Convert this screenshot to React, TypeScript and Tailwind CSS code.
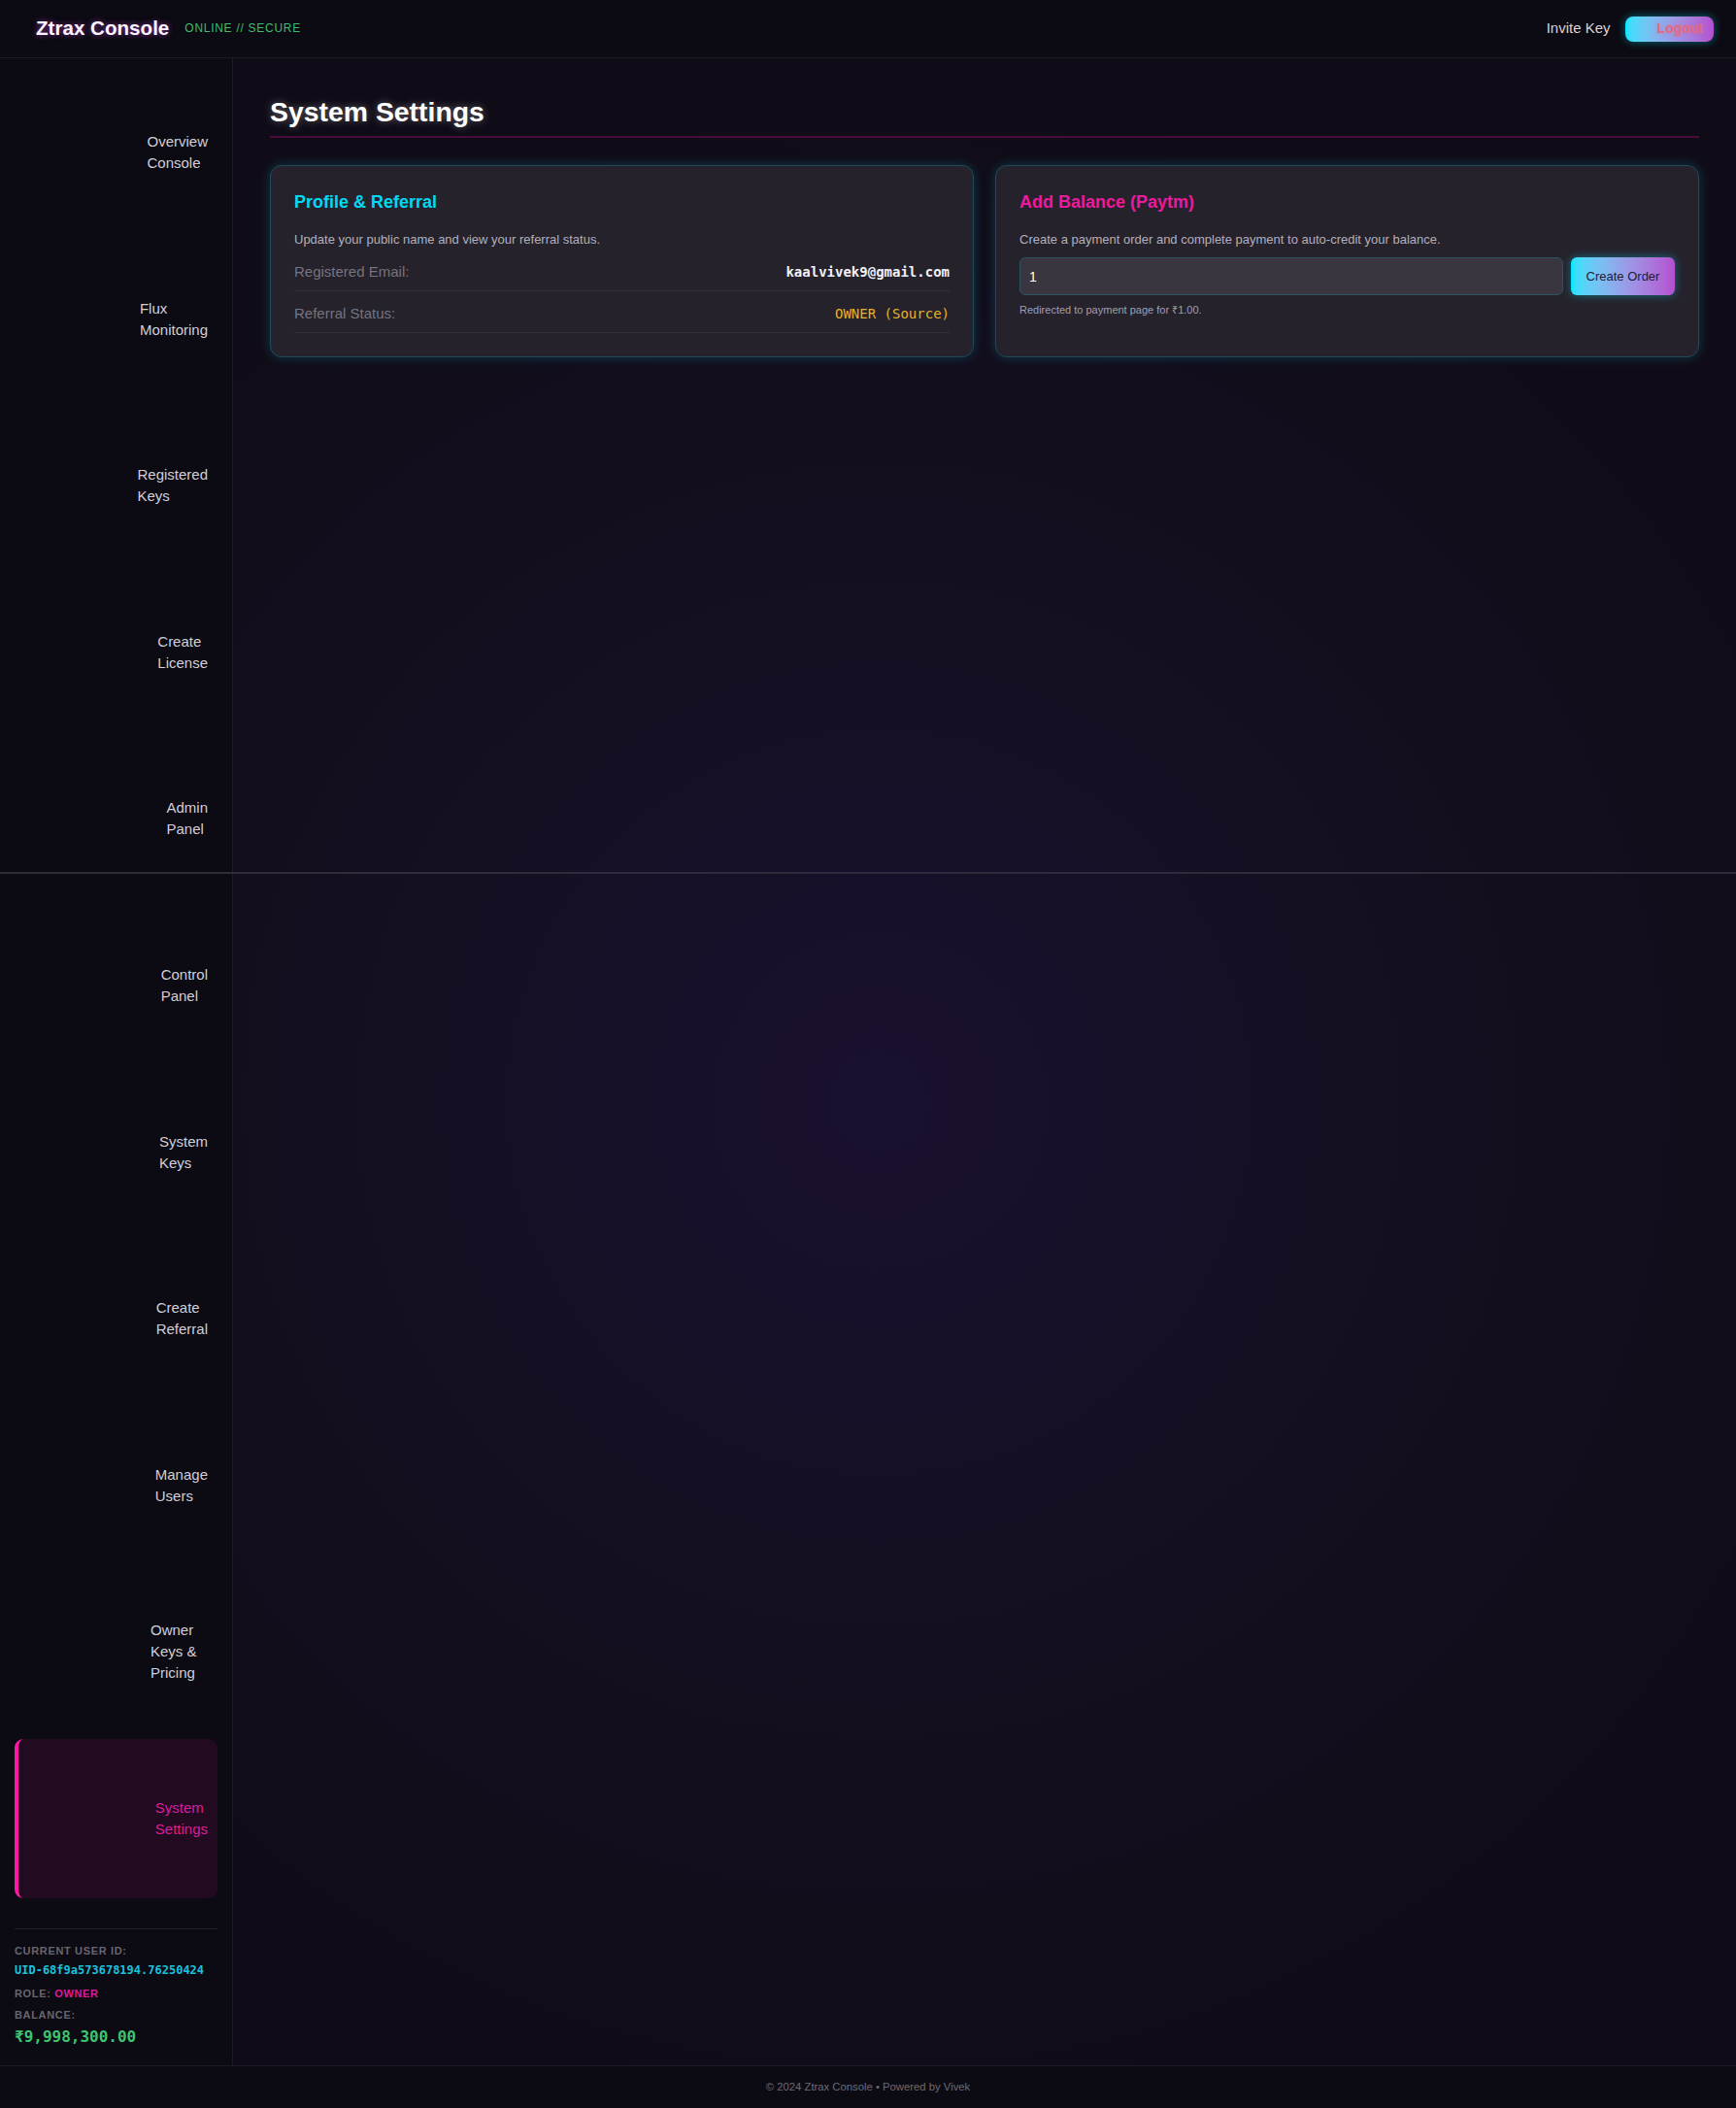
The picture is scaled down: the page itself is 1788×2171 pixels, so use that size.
import type { ReactNode } from 'react'

// ---------------------------------------------------------------------------
// Data
// ---------------------------------------------------------------------------

const navItems: { lines: string[]; active?: boolean; width?: string }[] = [
  { lines: ['Overview', 'Console'] },
  { lines: ['Flux', 'Monitoring'] },
  { lines: ['Registered', 'Keys'] },
  { lines: ['Create', 'License'] },
  { lines: ['Admin', 'Panel'] },
  { lines: ['Control', 'Panel'] },
  { lines: ['System', 'Keys'] },
  { lines: ['Create', 'Referral'] },
  { lines: ['Manage', 'Users'] },
  { lines: ['Owner', 'Keys &', 'Pricing'], width: 'w-[59px]' },
  { lines: ['System', 'Settings'], active: true },
]

const mono = "font-['DejaVu_Sans_Mono','Liberation_Mono',monospace]"

// ---------------------------------------------------------------------------
// Pieces
// ---------------------------------------------------------------------------

function Header() {
  return (
    <header className="flex h-[60px] items-center justify-between border-b border-[#1d1b26] bg-[#0c0a12] pl-[37px] pr-[23px]">
      <div className="flex items-center gap-[16px]">
        <span className="text-[20.6px] font-bold text-[#fbf4ff] [text-shadow:0_0_6px_rgba(230,80,255,0.55)]">
          Ztrax Console
        </span>
        <span className="text-[12px] font-medium tracking-[0.06em] text-[#3fbd6c]">ONLINE // SECURE</span>
      </div>
      <div className="flex items-center gap-[15px]">
        <span className="text-[15px] text-[#d7d4dd]">Invite Key</span>
        <button className="h-[26px] rounded-[8px] bg-gradient-to-r from-[#00e5ff] to-[#b34fd0] pl-[33px] pr-[11px] text-[14px] font-semibold text-[#e06a82] shadow-[0_0_10px_rgba(0,229,255,0.45)] [text-shadow:0_0_4px_rgba(255,90,130,0.5)]">
          Logout
        </button>
      </div>
    </header>
  )
}

function Sidebar() {
  return (
    <aside className="flex w-[240px] shrink-0 flex-col border-r border-[#1d1b26] bg-[#0c0a12] px-[15px] pt-[15px] pb-[19px]">
      <nav className="flex flex-col gap-[7.6px]">
        {navItems.map((item) => (
          <div
            key={item.lines.join(' ')}
            className={
              item.active
                ? 'flex h-[164px] items-center justify-end rounded-[9px] border-l-[4px] border-[#ff17a8] bg-[#220a21] pr-[10px] text-[15px] leading-[22px] text-[#d81f9c]'
                : 'flex h-[164px] items-center justify-end pr-[10px] text-[15px] leading-[22px] text-[#d2cfd8]'
            }
          >
            <div className={item.width ?? ''}>
              {item.lines.map((l) => (
                <div key={l}>{l}</div>
              ))}
            </div>
          </div>
        ))}
      </nav>

      <div className="mt-[31px] border-t border-[#24212d] pt-[15px]">
        <div className="text-[11px] font-semibold leading-[15px] tracking-[0.06em] text-[#68656f]">CURRENT USER ID:</div>
        <div className={`mt-[4px] text-[12px] font-bold leading-[16px] text-[#19c2dc] ${mono}`}>
          UID-68f9a573678194.76250424
        </div>
        <div className="mt-[9px] text-[11px] font-semibold leading-[15px] tracking-[0.06em] text-[#68656f]">
          ROLE: <span className="font-bold text-[#e0189a]">OWNER</span>
        </div>
        <div className="mt-[7px] text-[11px] font-semibold leading-[15px] tracking-[0.06em] text-[#68656f]">BALANCE:</div>
        <div className={`mt-[5px] text-[16px] font-bold leading-[20px] text-[#3ec46f] ${mono}`}>₹9,998,300.00</div>
      </div>
    </aside>
  )
}

function Card({ title, titleClass, children }: { title: string; titleClass: string; children: ReactNode }) {
  return (
    <section className="rounded-[12px] border border-[#1f4a56] bg-[#25222c] px-[24px] pt-[26px] pb-[24px] shadow-[0_0_12px_rgba(0,220,255,0.22)]">
      <h2 className={`text-[18px] font-bold leading-[22px] ${titleClass}`}>{title}</h2>
      {children}
    </section>
  )
}

function InfoRow({ label, value, valueClass }: { label: string; value: string; valueClass: string }) {
  return (
    <div className="flex items-center justify-between border-b border-[#33303b] pt-[12px] pb-[8px] leading-[22px]">
      <span className="text-[15px] text-[#77737f]">{label}</span>
      <span className={`text-[14px] font-bold ${mono} ${valueClass}`}>{value}</span>
    </div>
  )
}

function Main() {
  return (
    <main className="flex-1 bg-[radial-gradient(circle_at_43%_52%,#1a1030_0%,#150f22_35%,#100c17_75%)] px-[38px] pt-[38px]">
      <h1 className="border-b-2 border-[#4a0d3b] pb-[8px] text-[28.4px] font-bold leading-[34px] text-white [text-shadow:0_0_8px_rgba(255,255,255,0.35)]">
        System Settings
      </h1>

      <div className="mt-[28px] grid grid-cols-2 gap-[22px]">
        <Card title="Profile & Referral" titleClass="text-[#00d9f2]">
          <p className="mt-[19px] text-[13px] leading-[18px] text-[#b3b0bb]">
            Update your public name and view your referral status.
          </p>
          <div className="mt-[1px]">
            <InfoRow label="Registered Email:" value="kaalvivek9@gmail.com" valueClass="text-[#f3f1f7]" />
            <InfoRow label="Referral Status:" value="OWNER (Source)" valueClass="text-[#e6b422] font-normal" />
          </div>
        </Card>

        <Card title="Add Balance (Paytm)" titleClass="text-[#ec1a9c]">
          <p className="mt-[19px] text-[13px] leading-[18px] text-[#b3b0bb]">
            Create a payment order and complete payment to auto-credit your balance.
          </p>
          <div className="mt-[9px] flex gap-[8px]">
            <input
              defaultValue="1"
              className="h-[39px] min-w-0 flex-1 rounded-[6px] border border-[#2b5561] bg-[#393640] px-[9px] text-[14px] text-white outline-none"
            />
            <button className="h-[39px] w-[107px] rounded-[6px] bg-gradient-to-r from-[#00e5ff] to-[#b34fd0] text-[13px] text-[#1c1b3c] shadow-[0_0_10px_rgba(0,229,255,0.4)]">
              Create Order
            </button>
          </div>
          <p className="mt-[8px] text-[11px] leading-[15px] text-[#a29fab]">Redirected to payment page for ₹1.00.</p>
        </Card>
      </div>
    </main>
  )
}

// ---------------------------------------------------------------------------
// App
// ---------------------------------------------------------------------------

export default function App() {
  return (
    <div className="relative min-h-screen bg-[#0c0a12] font-['Liberation_Sans',Arial,sans-serif]">
      <Header />
      <div className="flex">
        <Sidebar />
        <Main />
      </div>
      <footer className="flex h-[45px] items-center justify-center border-t border-[#1d1b26] bg-[#0c0a12] text-[11.3px] text-[#6d6a77]">
        © 2024 Ztrax Console • Powered by Vivek
      </footer>
      {/* viewport fold line drawn across the page */}
      <div className="pointer-events-none absolute top-[898px] right-0 left-0 h-[2px] bg-[#302a3a]" />
    </div>
  )
}
